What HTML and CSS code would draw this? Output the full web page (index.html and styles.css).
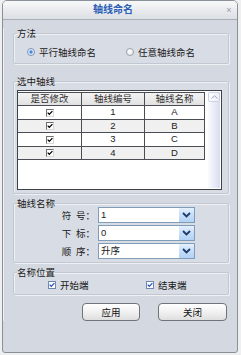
FILE: index.html
```html
<!DOCTYPE html>
<html lang="zh">
<head>
    <meta charset="UTF-8">
    <meta name="viewport" content="width=device-width, initial-scale=1.0">
    <title>轴线命名</title>
    <link rel="stylesheet" href="styles.css">
</head>
<body>
    <div class="dlg">
        <div class="titlebar">
            <span class="title">轴线命名</span>
            <span class="close">×</span>
        </div>

        <div class="dlg-body">
            <fieldset class="grp grp-method">
                <legend>方法</legend>
                <div class="radios">
                    <label class="opt opt-first"><span class="radio on"></span>平行轴线命名</label>
                    <label class="opt"><span class="radio"></span>任意轴线命名</label>
                </div>
            </fieldset>

            <fieldset class="grp grp-axes">
                <legend>选中轴线</legend>
                <div class="grid">
                    <table class="axes">
                        <colgroup>
                            <col class="c1"><col class="c2"><col class="c3">
                        </colgroup>
                        <thead>
                            <tr><th>是否修改</th><th>轴线编号</th><th>轴线名称</th></tr>
                        </thead>
                        <tbody>
                            <tr><td><span class="tick"></span></td><td>1</td><td>A</td></tr>
                            <tr class="alt"><td><span class="tick"></span></td><td>2</td><td>B</td></tr>
                            <tr><td><span class="tick"></span></td><td>3</td><td>C</td></tr>
                            <tr class="alt"><td><span class="tick"></span></td><td>4</td><td>D</td></tr>
                        </tbody>
                    </table>
                    <div class="vscroll">
                        <div class="vscroll-up">
                            <svg width="7" height="4" viewBox="0 0 7 4"><path d="M0.5 3.5 L3.5 0.8 L6.5 3.5" fill="none" stroke="#9aa3bd" stroke-width="1"/></svg>
                        </div>
                    </div>
                </div>
            </fieldset>

            <fieldset class="grp grp-name">
                <legend>轴线名称</legend>
                <div class="fields">
                    <div class="field">
                        <span class="field-label">符&ensp;号：</span>
                        <div class="combo"><span class="combo-text">1</span><span class="combo-btn"></span></div>
                    </div>
                    <div class="field">
                        <span class="field-label">下&ensp;标：</span>
                        <div class="combo"><span class="combo-text">0</span><span class="combo-btn"></span></div>
                    </div>
                    <div class="field">
                        <span class="field-label">顺&ensp;序：</span>
                        <div class="combo"><span class="combo-text">升序</span><span class="combo-btn"></span></div>
                    </div>
                </div>
            </fieldset>

            <fieldset class="grp grp-pos">
                <legend>名称位置</legend>
                <div class="checks">
                    <label class="opt opt-first"><span class="check"></span>开始端</label>
                    <label class="opt"><span class="check"></span>结束端</label>
                </div>
            </fieldset>

            <div class="actions">
                <button class="btn btn-apply">应用</button>
                <button class="btn btn-close">关闭</button>
            </div>
        </div>
    </div>

    <script>
        // flechas de los combos y marcas de verificación
        const chevron = '<svg width="9" height="6" viewBox="0 0 9 6"><path d="M1 1 L4.5 4.5 L8 1" fill="none" stroke="#1c3a6c" stroke-width="1.8"/></svg>';
        document.querySelectorAll('.combo-btn').forEach(b => b.innerHTML = chevron);

        const tickBlack = '<svg width="7" height="6" viewBox="0 0 7 6"><path d="M0.8 2.6 L2.7 4.6 L6.3 0.8" fill="none" stroke="#000" stroke-width="1.5"/></svg>';
        document.querySelectorAll('.tick').forEach(t => t.innerHTML = tickBlack);

        const tickBlue = '<svg width="7" height="6" viewBox="0 0 7 6"><path d="M0.8 2.6 L2.7 4.6 L6.3 0.8" fill="none" stroke="#2553c4" stroke-width="1.5"/></svg>';
        document.querySelectorAll('.check').forEach(c => c.innerHTML = tickBlue);
    </script>
</body>
</html>
```

FILE: styles.css
```css
html {
    background-color: #efefef;
}

body {
    margin: 0;
    font-family: "Liberation Sans", "Noto Sans CJK SC", sans-serif;
    font-size: 9.5px;
    color: #1a1a1a;
}

.dlg {
    margin-left: 2px;
    width: 236px;
    height: 353px;
    box-sizing: border-box;
    border: 1px solid #8a9099;
    border-radius: 5px 5px 3px 3px;
    background-color: #d4d9e1;
    overflow: hidden;
}

.titlebar {
    display: flex;
    align-items: center;
    height: 18px;
    border-bottom: 1px solid #a9afb8;
    background: linear-gradient(#f8f9fa, #e6e8ec 60%, #dcdfe4);
}

.title {
    flex: 1;
    text-align: center;
    font-size: 10px;
    font-weight: bold;
    color: #2a5fb5;
    line-height: 18px;
}

.close {
    width: 12px;
    margin-right: 2px;
    text-align: center;
    font-size: 9px;
    color: #9a9a9a;
}

.dlg-body {
    padding: 0 8px 0 10px;
    box-shadow: inset 1px 0 0 #eceff3;
}

.grp {
    margin: 0;
    padding: 0 0 0 3px;
    min-width: 0;
    border: 1px solid #c2c8d1;
    border-radius: 2px;
    box-shadow: inset 1px 1px 0 #eef0f4, 1px 1px 0 #eef0f4;
    background-color: #d8dce4;
}

.grp legend {
    padding: 0;
    line-height: 11px;
    color: #1a1a1a;
}

/* 方法 */
.grp-method {
    margin-top: 8px;
    padding-top: 7px;
    padding-bottom: 5px;
}

.radios,
.checks {
    display: flex;
    align-items: center;
    height: 12px;
}

.radios {
    padding-left: 10px;
}

.opt {
    display: flex;
    align-items: center;
    gap: 4px;
    white-space: nowrap;
}

.radios .opt-first {
    width: 99px;
}

.radio {
    width: 8px;
    height: 8px;
    box-sizing: border-box;
    border: 1px solid #9aa1ab;
    border-radius: 50%;
    background: radial-gradient(circle at 40% 35%, #ffffff, #dfe2e7);
}

.radio.on {
    border-color: #7d93b6;
    background: radial-gradient(circle, #3d7ee0 0, #4f8fe6 30%, #cfe0f6 45%, #f3f6fb 80%);
}

/* 选中轴线 */
.grp-axes {
    margin-top: 12px;
    padding-top: 3px;
    padding-bottom: 3px;
}

.grid {
    display: flex;
    width: 205px;
    height: 100px;
    box-sizing: border-box;
    border: 1px solid #3f4348;
    background-color: #fff;
}

.axes {
    width: 187px;
    table-layout: fixed;
    border-collapse: separate;
    border-spacing: 0;
    align-self: flex-start;
    margin-top: 1px;
}

.axes col.c1 { width: 64px; }
.axes col.c2 { width: 63px; }
.axes col.c3 { width: 60px; }

.axes th,
.axes td {
    padding: 0;
    text-align: center;
    border-right: 1px solid #4a4e54;
    border-bottom: 1px solid #4a4e54;
    white-space: nowrap;
    overflow: hidden;
}

.axes th {
    height: 12px;
    line-height: 12px;
    font-weight: normal;
    color: #333;
    border-top: 1px solid #4a4e54;
    background: linear-gradient(#f3f3f3, #e2e2e2);
}

.axes td {
    height: 12.5px;
    line-height: 12px;
    color: #222;
}

.axes tr.alt td {
    background-color: #f0f0f0;
}

.tick {
    display: inline-flex;
    align-items: center;
    justify-content: center;
    width: 8px;
    height: 8px;
    box-sizing: border-box;
    vertical-align: middle;
    border-top: 1px solid #707070;
    border-left: 1px solid #707070;
    border-right: 1px solid #d8d8d8;
    border-bottom: 1px solid #d8d8d8;
    background-color: #fff;
}

.vscroll {
    width: 12px;
    margin-left: auto;
    margin-top: 1px;
    margin-bottom: 1px;
    margin-right: 1px;
    background: linear-gradient(to right, #fbfbfe, #e6e9f6 60%, #d8ddf0);
}

.vscroll-up {
    display: flex;
    align-items: center;
    justify-content: center;
    height: 10px;
    box-sizing: border-box;
    border: 1px solid #ccd2e3;
    border-radius: 2px;
    background: linear-gradient(to right, #ffffff, #eceffa);
}

/* 轴线名称 */
.grp-name {
    margin-top: 4px;
    padding-bottom: 3px;
}

.fields {
    display: flex;
    flex-direction: column;
    gap: 2px;
    margin-top: -2px;
    padding-left: 38px;
}

.field {
    display: flex;
    align-items: center;
}

.field-label {
    width: 40px;
    margin-right: 3px;
    text-align: right;
    white-space: pre;
}

.combo {
    display: flex;
    width: 97px;
    height: 16px;
    box-sizing: border-box;
    border: 1px solid #7f9db9;
    background-color: #fff;
}

.combo-text {
    flex: 1;
    padding-left: 2px;
    line-height: 14px;
}

.combo-btn {
    display: flex;
    align-items: center;
    justify-content: center;
    width: 15px;
    background: linear-gradient(#e4f0fd, #c6def8 50%, #b3d2f5);
}

/* 名称位置 */
.grp-pos {
    margin-top: 4px;
    padding-top: 1px;
    padding-bottom: 3px;
}

.checks {
    padding-left: 31px;
}

.checks .opt-first {
    width: 98px;
}

.check {
    display: inline-flex;
    align-items: center;
    justify-content: center;
    width: 8px;
    height: 8px;
    box-sizing: border-box;
    border: 1px solid #7088b0;
    background-color: #fff;
}

/* botones */
.actions {
    display: flex;
    justify-content: flex-end;
    gap: 18px;
    margin-top: 8px;
    margin-right: 2px;
}

.btn {
    height: 18px;
    padding: 0;
    font-family: inherit;
    font-size: 9.5px;
    color: #111;
    border: 1px solid #707378;
    border-radius: 4px;
    background: linear-gradient(#ffffff, #f1f1f1 50%, #dedede);
    cursor: pointer;
}

.btn-apply { width: 58px; }
.btn-close { width: 69px; }
```
